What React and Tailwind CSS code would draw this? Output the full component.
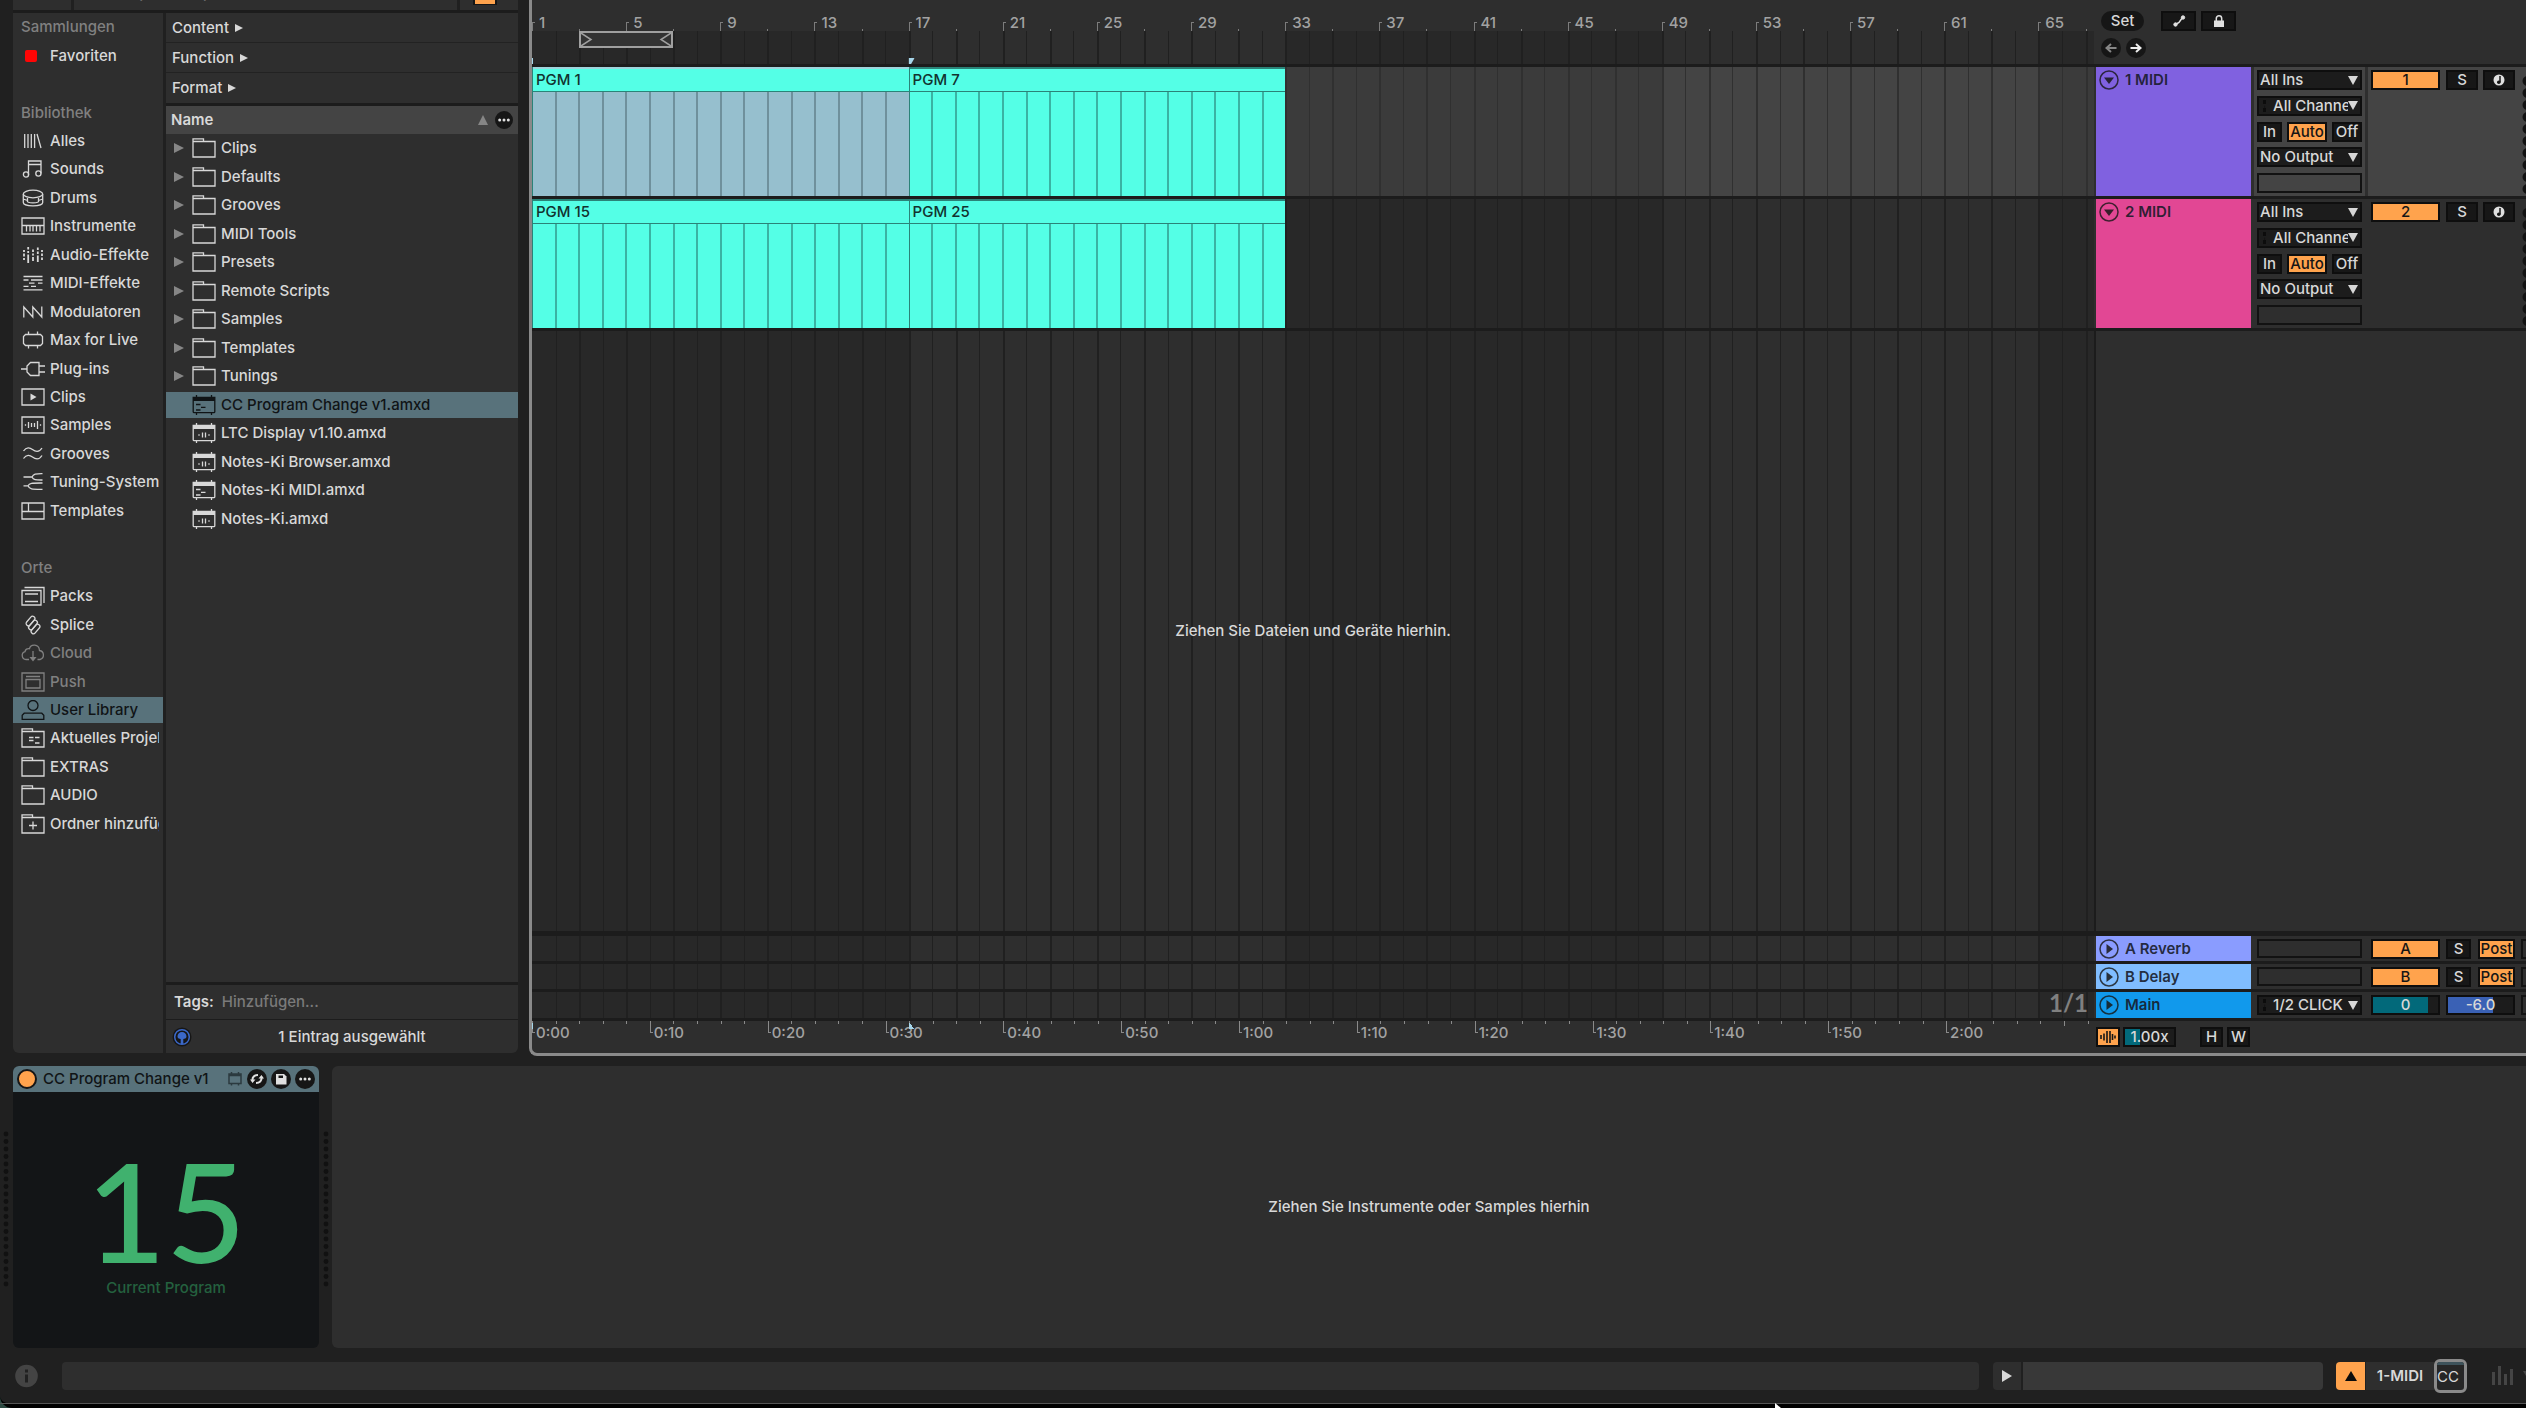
import React, { useState } from 'react';
import { clsx } from 'clsx';

// The visible range starts at bar 1 and ends shortly after bar 67
const VISIBLE_BARS = 66.36;
const pct = (bars) => `${(bars * 100) / VISIBLE_BARS}%`;
const BARS = Array.from({ length: 67 }, (_, i) => i);

const LIBRARY = [
  { label: 'Alles', icon: 'all' },
  { label: 'Sounds', icon: 'sounds' },
  { label: 'Drums', icon: 'drums' },
  { label: 'Instrumente', icon: 'instruments' },
  { label: 'Audio-Effekte', icon: 'audioFx' },
  { label: 'MIDI-Effekte', icon: 'midiFx' },
  { label: 'Modulatoren', icon: 'modulators' },
  { label: 'Max for Live', icon: 'max' },
  { label: 'Plug-ins', icon: 'plugins' },
  { label: 'Clips', icon: 'clips' },
  { label: 'Samples', icon: 'samples' },
  { label: 'Grooves', icon: 'grooves' },
  { label: 'Tuning-Systeme', icon: 'tuning' },
  { label: 'Templates', icon: 'templates' },
];

const PLACES = [
  { label: 'Packs', icon: 'packs' },
  { label: 'Splice', icon: 'splice' },
  { label: 'Cloud', icon: 'cloud', disabled: true },
  { label: 'Push', icon: 'push', disabled: true },
  { label: 'User Library', icon: 'user' },
  { label: 'Aktuelles Projekt', icon: 'project' },
  { label: 'EXTRAS', icon: 'folder' },
  { label: 'AUDIO', icon: 'folder' },
  { label: 'Ordner hinzufügen', icon: 'addFolder' },
];

const FOLDERS = ['Clips', 'Defaults', 'Grooves', 'MIDI Tools', 'Presets', 'Remote Scripts', 'Samples', 'Templates', 'Tunings'];

const FILES = [
  { label: 'CC Program Change v1.amxd', icon: 'amxdMidi' },
  { label: 'LTC Display v1.10.amxd', icon: 'amxdAudio' },
  { label: 'Notes-Ki Browser.amxd', icon: 'amxdAudio' },
  { label: 'Notes-Ki MIDI.amxd', icon: 'amxdMidi' },
  { label: 'Notes-Ki.amxd', icon: 'amxdAudio' },
];

const TRACKS = [
  { id: 1, color: 'bg-[#8061e0]', selected: true, clips: [{ name: 'PGM 1', selected: true }, { name: 'PGM 7' }] },
  { id: 2, color: 'bg-[#e24794]', clips: [{ name: 'PGM 15' }, { name: 'PGM 25' }] },
];

const RETURNS = [
  { id: 'A', name: 'A Reverb', color: 'bg-[#8a9cff]' },
  { id: 'B', name: 'B Delay', color: 'bg-[#80bdff]' },
];

const FOLDER_PATH = <path d="M1 19V.8h10.5v2.7H23V19zM1 3.5h10.5" />;

const AMXD_FRAME = (
  <>
    <path d="M1.2 2.5h21.6v14.2a1 1 0 0 1-1 1H2.2a1 1 0 0 1-1-1zM4.5 0v3M19.5 0v3M4.5 17.5V20M19.5 17.5V20" />
    <path d="M1 2h22v4H1z" fill="currentColor" stroke="none" />
  </>
);

const ICONS = {
  all: <path d="M3.7 3v14M7 3v14M10.3 3v14M13.6 3v14M16 3l4 14" />,
  sounds: (
    <>
      <path d="M7.5 16V2H20v12.5M7.5 5.500H20" />
      <circle cx="5" cy="15.5" r="2.6" />
      <circle cx="17.4" cy="14.5" r="2.6" />
    </>
  ),
  drums: (
    <>
      <ellipse cx="12" cy="6" rx="9.7" ry="3.8" />
      <path d="M2.3 6v8.500c0 1.800 4 3.300 9.700 3.300s9.700-1.500 9.700-3.300V6M6.500 10v4M17.500 10v4M2.300 11l4.200 1.500M21.700 11l-4.200 1.500M6.500 14c3 1 8 1 11 0" />
    </>
  ),
  instruments: <path d="M1 2h22v16H1zM1 9.500h22M5.500 10v5.500M9 10v5.500M12 10v5.500M15.500 10v5.500M19 10v5.500" />,
  audioFx: (
    <path
      strokeWidth="1.8"
      d="M3 5v2M3 8.500v3M3 13v2M7.200 2v2.500M7.200 6v2M7.200 9.500V18M12 4.500v2.500M12 8.500v2M12 12v4M16.800 2.500v2.500M16.800 6.500v2.500M16.800 10.500V17M21 5v2M21 8.500v2.500M21 12.500v2.500"
    />
  ),
  midiFx: <path d="M2.5 3.500h19M2.500 7h5M10 7h11.500M8 10.200h5.500M17 10.200h4.500M2.500 13.400h5M10 13.400h5M2.500 16.800h19" />,
  modulators: <path d="M2.8 15.500V5l9 10V5l9 10V4.500" />,
  max: <path d="M4.5 4.500h15l2 2v7l-2 2h-15l-2-2v-7zM7.500 1.500v3M16.500 1.500v3M7.500 15.500v3M16.500 15.500v3" />,
  plugins: <path d="M0 10h6M9.500 3.500H18v13H9.500L6 13V7zM18 7h6M18 13h6" />,
  clips: (
    <>
      <path d="M1 2h22v16H1z" />
      <path d="M9.500 6.500v7l6-3.500z" fill="currentColor" stroke="none" />
    </>
  ),
  samples: <path d="M1 2h22v16H1zM4.500 9.200v1.600M7.500 7v6M10.500 8v4M13.500 8v4M16.500 6v8M19.500 9.200v1.600" />,
  grooves: <path d="M2.5 7c3-4.500 6.500-3.500 9-1.500s6.500 3.500 9.500-1.500M2.500 14.500c3-4.500 6.500-3.500 9-1.500s6.500 3.500 9.500-1.500" />,
  tuning: <path d="M2.5 5H11c1.500-3.500 4-3.300 10.500-3.300M11 5c1.500 3.200 4 3 10.500 3M2.500 13.800H7c1.500-3 4-2.800 14.500-2.800M7 13.800c1.500 3.700 4 3.500 14.500 3.500" />,
  templates: <path d="M1 2h22v16H1zM7.500 2v8.500M1 10.500h22" />,
  packs: <path d="M1 4.500h19V19H1zM3.500 1.500H23V17M4 8h13M4 15.500h13" />,
  splice: (
    <>
      <rect x="4" y="3.700" width="11" height="4.600" rx="2.300" transform="rotate(-50 9.500 6)" />
      <rect x="6.500" y="7.700" width="11" height="4.600" rx="2.300" transform="rotate(-50 12 10)" />
      <rect x="9" y="11.700" width="11" height="4.600" rx="2.300" transform="rotate(-50 14.500 14)" />
    </>
  ),
  cloud: (
    <>
      <path d="M8 16.500H5a4 4 0 0 1-1-7.800 3.500 3.500 0 0 1 4.500-3C9.500 1 18 .5 18.500 7.500a4.600 4.600 0 0 1 .5 9h-2.500M12 8v8" />
      <path d="M8.500 14h7L12 18.500z" fill="currentColor" stroke="none" />
    </>
  ),
  push: <path d="M1 1h22v18H1zM5 4.500h14M5 7.500h14V16H5z" />,
  user: <path d="M12 .5a5 5 0 1 1 0 10 5 5 0 0 1 0-10zM1.200 19.500v-4.300l2-2h17.600l2 2v4.300z" />,
  folder: FOLDER_PATH,
  project: (
    <>
      {FOLDER_PATH}
      <path d="M8 9.500h4.500M8 12.500h4.500M14 9.500h4.500M14 15h4.500" />
    </>
  ),
  addFolder: (
    <>
      {FOLDER_PATH}
      <path d="M12 7.500v8M8 11.500h8" />
    </>
  ),
  amxdAudio: (
    <>
      {AMXD_FRAME}
      <path d="M7 11.200v1.600M10.500 9.500v5M13.500 9.500v5M17 11.200v1.600" />
    </>
  ),
  amxdMidi: (
    <>
      {AMXD_FRAME}
      <path d="M4 9.500h4.500M9 12.300h4.500M4 15h4.500" />
    </>
  ),
};

function Icon({ name }) {
  return (
    <svg viewBox="0 0 24 20" className="h-5 w-6 shrink-0" fill="none" stroke="currentColor" strokeWidth="1.3">
      {ICONS[name]}
    </svg>
  );
}

function Triangle({ dir = 'right', className }) {
  const points = { right: '0,0 10,5 0,10', down: '0,0 10,0 5,10', up: '0,10 5,0 10,10' };
  return (
    <svg viewBox="0 0 10 10" preserveAspectRatio="none" className={clsx('shrink-0', className)} fill="currentColor">
      <polygon points={points[dir]} />
    </svg>
  );
}

function SidebarItem({ item, active, onSelect }) {
  return (
    <button
      type="button"
      onClick={onSelect}
      className={clsx(
        'my-px flex items-center gap-[5px] overflow-hidden pl-2 pr-1 text-left whitespace-nowrap',
        active && 'bg-[#58727b] text-[#101416]',
        item.disabled && 'text-[#808080]'
      )}
    >
      <Icon name={item.icon} />
      <span className="overflow-hidden">{item.label}</span>
    </button>
  );
}

function Sidebar() {
  const [active, setActive] = useState('User Library');
  return (
    <nav className="w-[150px] shrink-0 rounded-bl-md bg-[#2e2e2e]">
      <div className="grid h-[825px] auto-rows-fr">
        <h2 className="flex items-center pl-2 text-[#808080]">Sammlungen</h2>
        <button type="button" className="flex items-center gap-[13px] pl-3 text-left">
          <span className="h-3 w-3 rounded-xs bg-[#ff0505]" />
          Favoriten
        </button>
        <span />
        <h2 className="flex items-center pl-2 text-[#808080]">Bibliothek</h2>
        {LIBRARY.map((item) => (
          <SidebarItem key={item.label} item={item} active={active === item.label} onSelect={() => setActive(item.label)} />
        ))}
        <span />
        <h2 className="flex items-center pl-2 text-[#808080]">Orte</h2>
        {PLACES.map((item) => (
          <SidebarItem key={item.label} item={item} active={active === item.label} onSelect={() => setActive(item.label)} />
        ))}
      </div>
    </nav>
  );
}

function FileList() {
  const [selected, setSelected] = useState('CC Program Change v1.amxd');
  return (
    <section className="flex flex-1 flex-col rounded-br-md bg-[#2e2e2e]">
      {['Content', 'Function', 'Format'].map((name, i) => (
        <button
          key={name}
          type="button"
          className={clsx('flex h-[30px] items-center gap-1.5 border-[#222] pl-1.5', i < 2 && 'border-b')}
        >
          {name}
          <Triangle className="h-2 w-2" />
        </button>
      ))}
      <div className="flex h-[31px] items-center border-t-3 border-[#1c1c1c] bg-[#444] pr-[5px] pl-[5px]">
        <span className="flex-1 font-semibold">Name</span>
        <Triangle dir="up" className="mr-[7px] h-2.5 w-2.5 text-[#868686]" />
        <button type="button" aria-label="Spalten" className="flex h-4.5 w-4.5 items-center justify-center rounded-full bg-[#161616]">
          <Dots />
        </button>
      </div>
      <ul className="grid h-[399px] auto-rows-fr">
        {FOLDERS.map((name) => (
          <li key={name} className="flex items-center pl-2">
            <Triangle className="mr-2 h-2.5 w-2.5 text-[#868686]" />
            <Icon name="folder" />
            <span className="pl-[5px]">{name}</span>
          </li>
        ))}
        {FILES.map((file) => (
          <li key={file.label} className="flex py-px">
            <button
              type="button"
              onClick={() => setSelected(file.label)}
              className={clsx('flex flex-1 items-center pl-[26px]', selected === file.label && 'bg-[#58727b] text-[#101416]')}
            >
              <Icon name={file.icon} />
              <span className="pl-[5px]">{file.label}</span>
            </button>
          </li>
        ))}
      </ul>
      <div className="flex-1" />
      <label className="flex h-[38px] items-center gap-2 border-t-3 border-b border-[#1c1c1c] pl-2">
        <span className="font-semibold">Tags:</span>
        <input type="text" placeholder="Hinzufügen..." className="min-w-0 flex-1 bg-transparent outline-none placeholder:text-[#7a7a7a]" />
      </label>
      <div className="flex h-[33px] items-center pr-1.5 pl-1.5">
        <button type="button" aria-label="Vorhören" className="rounded-full">
          <svg viewBox="0 0 20 20" className="h-5 w-5" fill="none">
            <circle cx="10" cy="10" r="9.5" fill="#161616" />
            <circle cx="10" cy="10" r="7.3" stroke="#3b68c8" strokeWidth="1.5" />
            <path d="M5.500 9.500a4.500 4.500 0 0 1 9 0c0 2-2 2.300-3.200 2.500v5H8.700v-5c-1.200-.2-3.200-.5-3.200-2.500z" fill="#3b68c8" />
          </svg>
        </button>
        <span className="flex-1 text-center">1 Eintrag ausgewählt</span>
      </div>
    </section>
  );
}

function Dots() {
  return (
    <svg viewBox="0 0 12 4" className="h-1 w-3" fill="#e0e0e0">
      <circle cx="1.7" cy="2" r="1.5" />
      <circle cx="6" cy="2" r="1.5" />
      <circle cx="10.3" cy="2" r="1.5" />
    </svg>
  );
}

// Alternating 16-bar bands with one line per bar
function BarGrid({ light = false }) {
  return (
    <svg className="absolute inset-0 h-full w-full" shapeRendering="crispEdges">
      {[0, 32, 64].map((bar) => (
        <rect key={bar} x={pct(bar)} y="0" width={pct(16)} height="100%" fill={light ? '#3b3b3b' : '#282828'} />
      ))}
      {BARS.slice(1).map((bar) => (
        <rect key={bar} x={pct(bar)} y="0" width={bar % 2 ? 1 : 2} height="100%" fill={light ? '#303030' : '#202020'} />
      ))}
    </svg>
  );
}

function Clip({ clip }) {
  return (
    <button type="button" style={{ width: pct(16) }} className="flex shrink-0 flex-col border-l border-[#2b8378] text-left">
      <span
        className={clsx(
          'flex h-[25px] w-full items-center border-t-2 border-b bg-[#54ffe6] pl-[3px] text-[#12332f]',
          clip.selected ? 'border-t-[#9fd4dc] border-b-[#2b8378]' : 'border-[#2b8378]'
        )}
      >
        {clip.name}
      </span>
      <span className={clsx('flex w-full flex-1', clip.selected ? 'bg-[#96bfce]' : 'bg-[#54ffe6]')}>
        {BARS.slice(0, 16).map((bar) => (
          <span
            key={bar}
            className={clsx('flex-1', bar > 0 && 'border-l-2', clip.selected ? 'border-[#6f909c]' : 'border-[#3ab3a3]')}
          />
        ))}
      </span>
    </button>
  );
}

function BeatRuler() {
  return (
    <div className="flex flex-1 flex-col overflow-hidden">
      <div className="relative h-[31px]">
        <svg className="absolute inset-0 h-full w-full" fill="#7c7c7c" shapeRendering="crispEdges">
          {BARS.filter((bar) => bar % 2 === 0).map((bar) =>
            bar % 4 === 0 ? (
              <g key={bar}>
                <rect x={pct(bar)} y="22" width="1" height="9" />
                <rect x={pct(bar)} y="22" width="3" height="1" />
              </g>
            ) : (
              <rect key={bar} x={pct(bar)} y="29" width="1" height="2" />
            )
          )}
        </svg>
        <div className="flex h-full items-end overflow-hidden text-[#a2a2a2]">
          {BARS.filter((bar) => bar % 4 === 0).map((bar) => (
            <span key={bar} style={{ width: pct(4) }} className="shrink-0 pl-[7px] leading-4">
              {bar + 1}
            </span>
          ))}
        </div>
      </div>
      <div className="relative flex-1">
        <BarGrid />
        <svg className="absolute bottom-0 h-1.5 w-full overflow-visible" fill="#a6d6ea">
          <rect width="1" height="6" />
          <svg x={pct(16)} width="6" height="6">
            <path d="M0 0h6L2.5 6H0z" />
          </svg>
        </svg>
        <div className="relative flex">
          <span style={{ width: pct(2) }} />
          <button
            type="button"
            aria-label="Loop"
            style={{ width: pct(4) }}
            className="flex h-[17px] justify-between border-2 border-[#a0a0a0] bg-[#333] text-[#a0a0a0]"
          >
            <svg viewBox="0 0 12 13" className="h-[13px] w-3" fill="none" stroke="currentColor" strokeWidth="1.5">
              <path d="M0 0l10 6.5L0 13" />
            </svg>
            <svg viewBox="0 0 12 13" className="h-[13px] w-3" fill="none" stroke="currentColor" strokeWidth="1.5">
              <path d="M12 0L2 6.5 12 13" />
            </svg>
          </button>
        </div>
      </div>
    </div>
  );
}

function TimeRuler() {
  const label = (bar) => {
    const seconds = bar * 2;
    return `${Math.floor(seconds / 60)}:${String(seconds % 60).padStart(2, '0')}`;
  };
  return (
    <div className="relative flex-1 overflow-hidden">
      <svg className="absolute inset-0 h-full w-full" fill="#8a8a8a" shapeRendering="crispEdges">
        {BARS.map((bar) => (
          <rect key={bar} x={pct(bar)} y="0" width="1" height={bar === 65 ? 5 : bar % 5 === 0 ? 12 : 3} />
        ))}
        {BARS.filter((bar) => bar % 5 === 0 && bar < 65).map((bar) => (
          <rect key={bar} x={pct(bar)} y="11" width="3" height="1" />
        ))}
        <rect y="2" width="1" height="6" fill="#a6d6ea" />
        <svg x={pct(16)} y="1" width="6" height="7" fill="#a6d6ea">
          <path d="M0 0l5 7H0z" />
        </svg>
      </svg>
      <div className="flex text-[#a2a2a2]">
        {BARS.filter((bar) => bar % 5 === 0 && bar < 65).map((bar) => (
          <span key={bar} style={{ width: pct(5) }} className="shrink-0 pl-1 leading-[23px]">
            {label(bar)}
          </span>
        ))}
      </div>
    </div>
  );
}

function Chooser({ label, value, indent = false }) {
  return (
    <span className="flex h-5 items-center border-2 border-[#0e0e0e] bg-[#1c1c1c]">
      {indent && <span className="ml-1 h-3 w-1 border-l-3 border-dotted border-[#0c0c0c]" />}
      <select
        aria-label={label}
        defaultValue={value}
        className={clsx('h-4 min-w-0 flex-1 appearance-none overflow-hidden text-clip bg-transparent leading-4 outline-none', indent ? 'pl-1.5' : 'pl-px')}
      >
        <option>{value}</option>
      </select>
      <Triangle dir="down" className="mr-0.5 h-[9px] w-2.5" />
    </span>
  );
}

function Toggle({ children, on = false, label, className }) {
  return (
    <button
      type="button"
      aria-label={label}
      className={clsx(
        'flex h-5 shrink-0 items-center justify-center border-2 border-[#0e0e0e]',
        on ? 'bg-[#ffa34d] text-[#161616]' : 'bg-[#171717]',
        className
      )}
    >
      {children}
    </button>
  );
}

function FoldIcon({ open = false }) {
  return (
    <svg viewBox="0 0 20 20" className="h-5 w-5 shrink-0" fill="none">
      <circle cx="10" cy="10" r="9" stroke="#171717" strokeOpacity=".8" strokeWidth="1.5" />
      <path d={open ? 'M5 7.500h10L10 14z' : 'M7.500 5v10l6.500-5z'} fill="#171717" fillOpacity=".85" />
    </svg>
  );
}

// One arrangement line: timeline lane, coloured header, in/out section, mixer section
function Row({ lane, title, color, open, io, mixer, selected, className }) {
  const bg = selected ? 'bg-[#444]' : 'bg-[#2e2e2e]';
  return (
    <div className={clsx('flex border-b-3 border-[#1c1c1c]', className)}>
      <div className={clsx('relative flex-1 overflow-hidden', bg)}>
        <BarGrid light={selected} />
        {lane}
      </div>
      <div className={clsx('ml-0.5 flex w-[155px] shrink-0 gap-1.5 pl-[3px] text-[#171a28]/90', open ? 'items-start pt-[3px]' : 'items-center', color)}>
        <FoldIcon open={open} />
        <span className="leading-5 font-semibold">{title}</span>
      </div>
      <div className={clsx('ml-[3px] flex w-[111px] shrink-0 flex-col justify-between p-[3px]', bg)}>{io}</div>
      <div className={clsx('ml-[3px] flex w-[158px] shrink-0 overflow-hidden p-[3px] pr-0', bg)}>{mixer}</div>
    </div>
  );
}

function Track({ track }) {
  return (
    <Row
      className="h-[132px]"
      selected={track.selected}
      color={track.color}
      title={`${track.id} MIDI`}
      open
      lane={
        <div className="relative flex h-full">
          {track.clips.map((clip) => (
            <Clip key={clip.name} clip={clip} />
          ))}
        </div>
      }
      io={
        <>
          <Chooser label="Eingangstyp" value="All Ins" />
          <Chooser label="Eingangskanal" value="All Channels" indent />
          <div className="flex justify-between">
            <Toggle className="w-[25px]">In</Toggle>
            <Toggle on className="w-10">Auto</Toggle>
            <Toggle className="w-[30px]">Off</Toggle>
          </div>
          <Chooser label="Ausgang" value="No Output" />
          <span className="h-5 border-2 border-[#121212]" />
        </>
      }
      mixer={
        <>
          <Toggle on className="w-[69px]">{track.id}</Toggle>
          <Toggle className="ml-1.5 w-8">S</Toggle>
          <Toggle label="Aufnahme" className="ml-[5px] w-8">
            <svg viewBox="0 0 12 12" className="h-3 w-3">
              <circle cx="6" cy="6" r="5.5" fill="#e0e0e0" />
              <path d="M7 2v6" stroke="#171717" strokeWidth="1.5" />
              <circle cx="5.8" cy="8.2" r="1.8" fill="#171717" />
            </svg>
          </Toggle>
          <svg viewBox="0 0 12 124" className="ml-[7px] h-[124px] w-3 shrink-0" fill="#121212">
            {BARS.slice(0, 10).map((i) => (
              <circle key={i} cx="5.5" cy={11 + i * 12} r="5" />
            ))}
          </svg>
        </>
      }
    />
  );
}

function Arrangement() {
  return (
    <main className="flex min-w-0 flex-1 flex-col overflow-hidden rounded-bl-lg border-b-3 border-l-3 border-[#8a8a8a] bg-[#2e2e2e]">
      <div className="flex h-[67px] border-b-3 border-[#1c1c1c]">
        <BeatRuler />
        <div className="flex w-[432px] shrink-0 flex-col gap-[7px] pt-[11px] pl-[7px]">
          <div className="flex">
            <button type="button" className="h-5 w-[43px] rounded-full bg-[#161616] leading-5">
              Set
            </button>
            <Toggle label="Automation" className="ml-[17px] w-[35px]">
              <svg viewBox="0 0 14 14" className="h-3.5 w-3.5" fill="#e0e0e0" stroke="#e0e0e0">
                <path d="M3.5 10.500L7 8.500l3.500-5" fill="none" strokeWidth="1.5" />
                <circle cx="3.5" cy="10.5" r="1.7" />
                <circle cx="11" cy="3.5" r="1.7" />
              </svg>
            </Toggle>
            <Toggle label="Sperren" className="ml-[5px] w-[35px]">
              <svg viewBox="0 0 14 14" className="h-3.5 w-3.5">
                <path d="M4.300 7V4.500a2.700 2.700 0 0 1 5.400 0V7" fill="none" stroke="#e0e0e0" strokeWidth="1.5" />
                <path d="M2 6.500h10V13H2z" fill="#e0e0e0" />
              </svg>
            </Toggle>
          </div>
          <div className="flex gap-[5px]">
            {['Zurück', 'Weiter'].map((label, i) => (
              <button key={label} type="button" aria-label={label} className="h-5 w-5 rounded-full bg-[#161616]">
                <svg
                  viewBox="0 0 20 20"
                  className={clsx('h-5 w-5', i === 0 ? 'rotate-180 text-[#868686]' : 'text-[#ececec]')}
                  fill="none"
                  stroke="currentColor"
                  strokeWidth="2"
                >
                  <path d="M4.500 10H14M10 6l4.500 4-4.500 4" />
                </svg>
              </button>
            ))}
          </div>
        </div>
      </div>

      {TRACKS.map((track) => (
        <Track key={track.id} track={track} />
      ))}

      <div className="flex flex-1">
        <div className="relative flex flex-1 items-center justify-center border-r-2 border-[#1c1c1c]">
          <BarGrid />
          <p className="relative">Ziehen Sie Dateien und Geräte hierhin.</p>
        </div>
        <div className="w-[430px] shrink-0" />
      </div>

      <div className="border-t-5 border-[#1c1c1c]">
        {RETURNS.map((ret) => (
          <Row
            key={ret.id}
            className="h-7"
            color={ret.color}
            title={ret.name}
            io={<span className="h-5 border-2 border-[#121212]" />}
            mixer={
              <>
                <Toggle on className="w-[69px]">{ret.id}</Toggle>
                <Toggle className="ml-1.5 w-[25px]">S</Toggle>
                <Toggle on className="ml-[7px] w-[37px]">Post</Toggle>
                <span className="ml-1.5 h-5 w-3 shrink-0 border-2 border-[#121212]" />
              </>
            }
          />
        ))}
        <Row
          className="h-[29px]"
          color="bg-[#1199ec]"
          title="Main"
          lane={<p className="relative pr-1.5 text-right font-[Lato,sans-serif] text-2xl leading-[22px] font-bold text-[#808080]">1/1</p>}
          io={<Chooser label="Main-Ausgang" value="1/2 CLICK" indent />}
          mixer={
            <>
              <button type="button" className="h-5 w-[69px] shrink-0 border-2 border-[#0e0e0e] bg-linear-to-r from-[#02697a] from-84% to-[#1c1c1c] to-84% leading-4">
                0
              </button>
              <button type="button" className="ml-1.5 h-5 w-[69px] shrink-0 border-2 border-[#0e0e0e] bg-linear-to-r from-[#3a61b5] from-70% to-[#1c1c1c] to-70% leading-4">
                -6.0
              </button>
              <span className="ml-1.5 h-5 w-3 shrink-0 border-2 border-[#121212]" />
            </>
          }
        />
      </div>

      <div className="flex h-8">
        <TimeRuler />
        <div className="flex w-[430px] shrink-0 items-start pt-1.5">
          <Toggle on label="Scrub" className="w-6">
            <svg viewBox="0 0 18 16" className="h-4 w-[18px]" stroke="#161616" strokeWidth="1.6">
              <path d="M2 6v4M5 4.500v7M8 2v12M11 2v12M13.500 5v6M16 6.500v3" />
            </svg>
          </Toggle>
          <button type="button" className="ml-[3px] h-5 w-[53px] border-2 border-[#0e0e0e] bg-linear-to-r from-[#02697a] from-30% to-[#1c1c1c] to-30% leading-4">
            1.00x
          </button>
          <Toggle className="ml-6 w-[23px]">H</Toggle>
          <Toggle className="ml-1 w-[23px]">W</Toggle>
        </div>
      </div>
    </main>
  );
}

function DragDots() {
  return (
    <svg viewBox="0 0 6 158" className="h-[158px] w-1.5 shrink-0" fill="#111">
      {BARS.slice(0, 21).map((i) => (
        <circle key={i} cx="3" cy={4 + i * 7.5} r="2.4" />
      ))}
    </svg>
  );
}

function DeviceView() {
  return (
    <section className="flex h-[282px] items-stretch">
      <div className="flex w-[13px] items-center pt-1 pl-[3px]">
        <DragDots />
      </div>
      <article className="flex w-[306px] flex-col overflow-hidden rounded-md bg-[#131517]">
        <header className="flex h-[26px] items-center gap-1 bg-[#58727b] pr-1 pl-1 text-[#101416]">
          <button type="button" aria-label="Gerät ein/aus" className="h-5 w-5 rounded-full border-2 border-[#161616] bg-[#ffa34d]" />
          <h3 className="flex-1 pl-0.5">CC Program Change v1</h3>
          <svg viewBox="0 0 16 16" className="h-4 w-4" fill="none" stroke="#2b3a3f" strokeWidth="1.5">
            <path d="M2 3h12v9.500H2zM2 4.500h12M4.500 1v2M11.500 1v2M4.500 12.500v2M11.500 12.500v2" />
          </svg>
          <button type="button" aria-label="Hot-Swap" className="h-5 w-5 rounded-full bg-[#161616]">
            <svg viewBox="0 0 20 20" className="h-5 w-5" fill="none" stroke="#e0e0e0" strokeWidth="2">
              <path d="M5.500 12c-.5-4 2-6 5.500-6M14.500 8c.5 4-2 6-5.500 6" />
              <path d="M3 10.500h5.500L5.500 14zM11.500 9.500H17L14.500 6z" fill="#e0e0e0" stroke="none" />
            </svg>
          </button>
          <button type="button" aria-label="Preset speichern" className="h-5 w-5 rounded-full bg-[#161616]">
            <svg viewBox="0 0 20 20" className="h-5 w-5">
              <path d="M5 5h8l2.500 2.500V15.500H5z" fill="#e0e0e0" />
              <path d="M7.500 6.500h4.500v2.500H7.500z" fill="#161616" />
            </svg>
          </button>
          <button type="button" aria-label="Optionen" className="flex h-5 w-5 items-center justify-center rounded-full bg-[#161616]">
            <Dots />
          </button>
        </header>
        <div className="flex flex-1 flex-col items-center justify-center">
          <output className="font-[Lato,sans-serif] text-[138px] leading-[136px] text-[#40b16e]">15</output>
          <p className="text-[#24613f]">Current Program</p>
        </div>
      </article>
      <div className="flex w-[13px] items-center justify-center pt-1">
        <DragDots />
      </div>
      <div className="flex flex-1 items-center justify-center rounded-l-md bg-[#2e2e2e]">Ziehen Sie Instrumente oder Samples hierhin</div>
    </section>
  );
}

function StatusBar() {
  return (
    <footer className="flex h-7 items-stretch overflow-visible">
      <button type="button" aria-label="Info" className="ml-[15px] w-[23px]">
        <svg viewBox="0 0 23 28" className="h-7 w-[23px]">
          <circle cx="11.5" cy="14" r="11.3" fill="#444" />
          <path d="M10 12.500h3v8h-3zM10 7.500h3v3h-3z" fill="#212121" />
        </svg>
      </button>
      <div className="ml-6 flex-1 rounded bg-[#2e2e2e]" />
      <button type="button" aria-label="Abspielen" className="ml-3.5 flex w-7 items-center justify-center rounded-l bg-[#2e2e2e]">
        <Triangle className="h-3 w-2.5" />
      </button>
      <div className="ml-0.5 w-[300px] rounded-r bg-[#383838]" />
      <button type="button" aria-label="Geräte anzeigen" className="ml-[13px] flex w-[29px] items-center justify-center rounded-l bg-[#ffa34d] text-[#0c0c0c]">
        <Triangle dir="up" className="h-2.5 w-3" />
      </button>
      <div className="ml-px flex w-[68px] items-center justify-center bg-[#2e2e2e] font-semibold">1-MIDI</div>
      <button
        type="button"
        className="-my-[3px] flex w-[33px] flex-col items-start overflow-hidden rounded-md border-3 border-[#8a8a8a] bg-[#262626] font-normal whitespace-nowrap"
      >
        <span className="h-[3px] w-full bg-[#3d525a]" />
        <span className="leading-6">CC Program Change v1</span>
      </button>
      <svg viewBox="0 0 35 28" className="ml-6 h-7 w-[35px]" fill="#454545">
        <path d="M1 10h3v13H1zM7 4h3v19H7zM13 12h3v11h-3zM19 7h3v16h-3zM32 9h3v5z" />
      </svg>
    </footer>
  );
}

export default function App() {
  return (
    <div className="relative min-h-screen bg-[#2c4a42] font-[Inter,'Liberation_Sans',sans-serif] text-[15px] leading-5 font-medium text-[#d8d8d8]">
      <div className="flex min-h-screen flex-col rounded-bl-xl border-b-4 border-black bg-[#202020]">
        <div className="flex flex-1">
          <div className="mb-[3px] ml-[13px] flex w-[505px] shrink-0 flex-col">
            <div className="flex h-[10px] items-end gap-[3px] overflow-hidden">
              <div className="h-full w-[58px] bg-[#2e2e2e]" />
              <input
                type="text"
                aria-label="Suche"
                placeholder="Suche (Cmd + F)"
                className="h-[34px] min-w-0 flex-1 bg-[#2e2e2e] pl-3.5 outline-none placeholder:text-[#7a7a7a]"
              />
              <div className="flex h-full w-[58px] justify-center bg-[#2e2e2e]">
                <button type="button" aria-label="Filter" className="mr-2 h-[5px] w-6 border-x-2 border-b border-[#161616] bg-[#ffa34d]" />
              </div>
            </div>
            <div className="flex flex-1 gap-[3px] border-t-3 border-[#1c1c1c]">
              <Sidebar />
              <FileList />
            </div>
          </div>
          <div className="w-[11px] shrink-0" />
          <Arrangement />
        </div>
        <div className="pt-[10px] pb-[14px]">
          <DeviceView />
        </div>
        <StatusBar />
        <div className="mt-[13px] h-px rounded-bl-xl bg-[#555]" />
      </div>
      {/* tip of the mouse pointer at the window's lower edge */}
      <svg viewBox="0 0 6 5" className="absolute bottom-0 left-[70%] ml-[7px] h-[5px] w-1.5">
        <path d="M0 0l6 5H0z" fill="#fff" />
      </svg>
    </div>
  );
}
